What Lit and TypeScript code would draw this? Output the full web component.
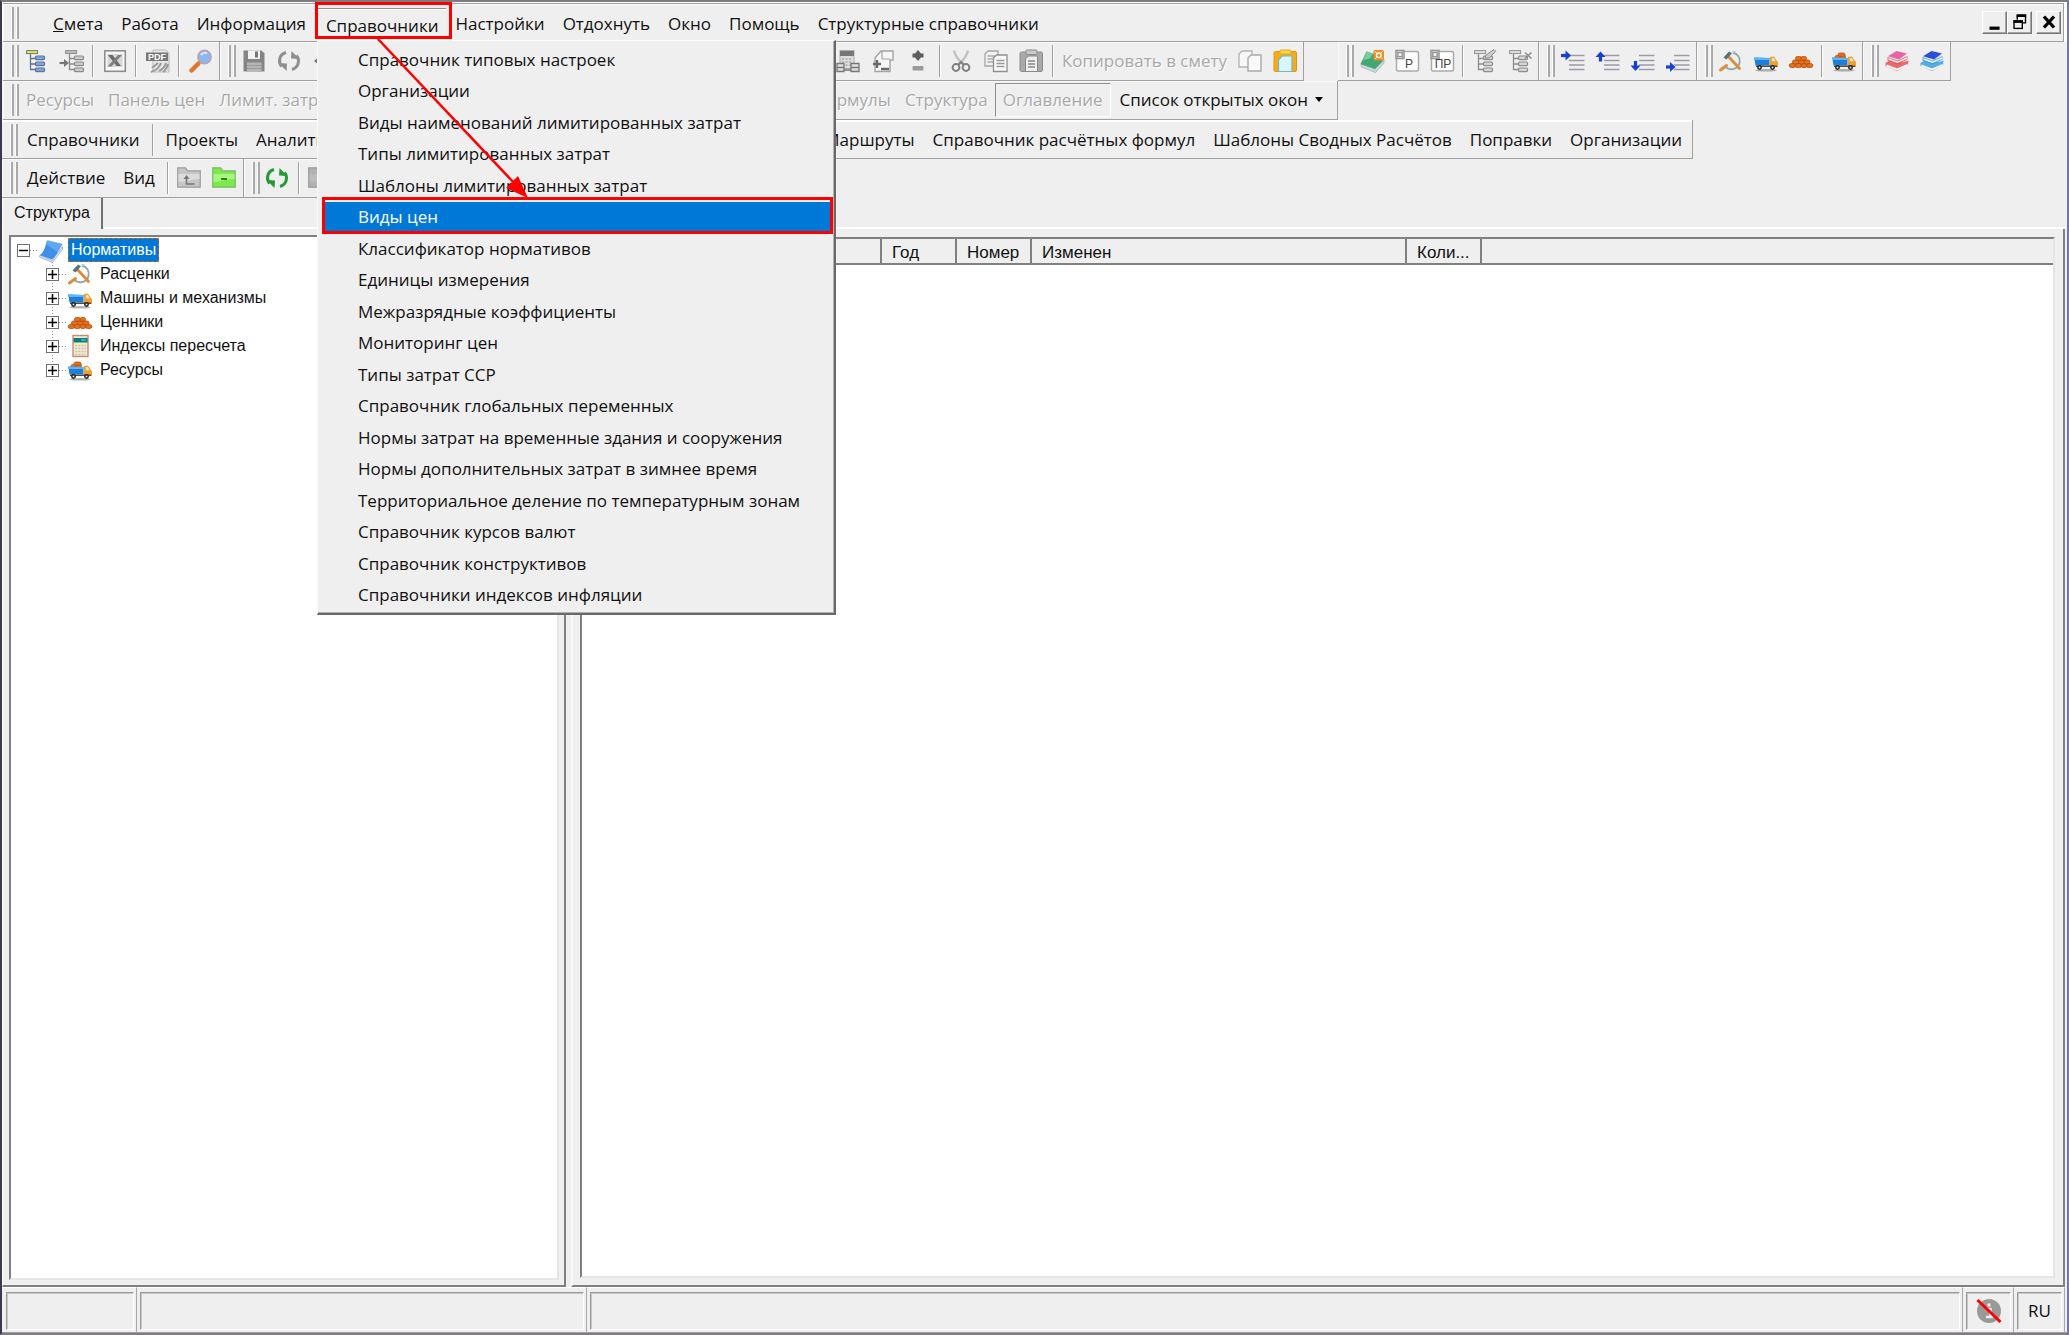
import { LitElement, html, css, svg, nothing } from "lit";
import { customElement, property, state } from "lit/decorators.js";
import { classMap } from "lit/directives/class-map.js";

const G = "#8e8e8e";

const hammer = svg`
  <path d="M14 3.500c5 1.500 7.500 5.500 6.500 10.500-.8 4-4.500 6.500-8.500 6.200-2-.1-4-.9-5.500-2.200" fill="none" stroke="#8fa9ad" stroke-width="2"/>
  <path d="M16.500 2.800l-3 .2" stroke="#b9cccf" stroke-width="1.500"/>
  <path d="M9 7l11.500 12.500" stroke="#d98f3a" stroke-width="2.800" stroke-linecap="round"/>
  <path d="M1.500 21l6-4.500" stroke="#d98f3a" stroke-width="3" stroke-linecap="round"/>
  <path d="M4.500 8.500l5.500-6 3 1.800-5.500 6.200z" fill="#5f7076"/>`;
const truckBody = svg`
  <ellipse cx="12" cy="21.300" rx="11" ry="1.300" fill="#777" opacity=".55"/>
  <path d="M.2 8.500l15.300 .5v7.500h-14z" fill="#1c7fdc"/>
  <path d="M.2 8.500l15.300 .5v2h-15z" fill="#5fb4f4"/>
  <path d="M15.800 8l4.200-.5 3 4.500 1 1v5h-8.200z" fill="#f0a12c"/>
  <path d="M17.800 9.200l2-.2 1.800 3.200h-3.800z" fill="#cfe9f5"/>
  <path d="M2 16.500h21v1.500h-21z" fill="#5a4a38"/>
  <circle cx="5.500" cy="18.500" r="2.400" fill="#222"/><circle cx="5.500" cy="18.500" r="1" fill="#ddd"/>
  <circle cx="18.500" cy="18.500" r="2.400" fill="#222"/><circle cx="18.500" cy="18.500" r="1" fill="#ddd"/>`;
const books = (cover: string, edge: string) => svg`
  <path d="M.5 14l4-2.500 14 1.500 5-1.500-.5 4.500-11 6-11.500-5z" fill="${edge}" opacity=".85"/>
  <path d="M1.500 15.500l10.500 4 10.500-4.500v1.800l-10.500 4.700-10.500-4z" fill="#fff"/>
  <path d="M2.500 8l10 3.500 10-4.500v3.500l-10 5-10-4z" fill="${edge}" opacity=".85"/>
  <path d="M3.500 9.200l9 3.300 9.500-4.200v1.500l-9.500 4.200-9-3.300z" fill="#fff"/>
  <path d="M3 7.300l8.500-5.300 10.500 2.500-8 6z" fill="${cover}"/>`;
const treeGlyph = (head: string, node: string, line: string) => svg`
  <path d="M5.500 5v15.500h5M5.500 9.500h5M5.500 15h5" fill="none" stroke="${line}" stroke-width="1.300"/>
  <rect x="1.600" y="1.600" width="11" height="3" fill="${head}" stroke="${line}" stroke-width=".9"/>
  <rect x="10.500" y="7" width="9" height="3.600" rx="1" fill="${node}" stroke="${line}" stroke-width="1.200"/>
  <rect x="10.500" y="13" width="9" height="3.600" rx="1" fill="${node}" stroke="${line}" stroke-width="1.200"/>
  <rect x="10.500" y="19" width="9" height="3.600" rx="1" fill="${node}" stroke="${line}" stroke-width="1.200"/>`;
const indentLines = svg`<path d="M8 6.500h15.500M8 11.500h15.500M8 16h15.500M8 20.500h15.500" stroke="#9a9ba8" stroke-width="1.500"/>`;
const gear = (c: string, x: number, y: number) => svg`
  <rect x="${x - 4}" y="${y - 4}" width="8" height="8" fill="#fff" stroke="${c}" stroke-width="1.600"/>
  <path d="M${x - 3} ${y - 3}l6 6M${x + 3} ${y - 3}l-6 6" stroke="${c}" stroke-width="1.400"/>
  <circle cx="${x}" cy="${y}" r="2.300" fill="#fff" stroke="${c}" stroke-width="1.400"/>`;
const sheet = (text: string, size: number) => svg`
  <rect x="1.500" y="2.500" width="22" height="19.500" rx="1.500" fill="#fdfdfd" stroke="#aaa" stroke-width="1.500"/>
  ${gear("#999", 5, 5.5)}
  <text x="${text.length > 1 ? 13 : 14}" y="19" text-anchor="middle" font-family="Liberation Sans, sans-serif" font-size="${size}" fill="#444">${text}</text>`;
const refresh = (c: string) => svg`
  <path d="M9 3.500c-7 2-8 9.500-4.500 14M15 20.500c7-2 8-9.500 4.500-14" fill="none" stroke="${c}" stroke-width="3"/>
  <path d="M1.500 14l8.500 .5-.5 7.500z M22.500 10l-8.500-.5 .5-7.500z" fill="${c}"/>`;
const folder = (a: string, b: string, line: string) => svg`
  <path d="M.8 21.200v-19.400h7.700l2 3h12.700v16.400z" fill="${b}" stroke="${line}" stroke-width="1.300"/>
  <path d="M1.500 8h21v5c-9 0-12 3-21 3z" fill="${a}"/>`;

const ICONS: Record<string, unknown> = {
  treeNew: treeGlyph("#f0e13c", "#7ea6e0", "#5f7391"),
  treeAdd: svg`<g transform="translate(4 0)">${treeGlyph("#bbb", "#ccc", "#8a8a8a")}</g>
    <path d="M-.5 14h6" stroke="#777" stroke-width="2.200"/><path d="M4 10l5 4-5 4z" fill="#777"/>`,
  excel: svg`<rect x="1.800" y="1.800" width="20.500" height="20.500" fill="#f7f7f7" stroke="${G}" stroke-width="1.600"/>
    <rect x="4.500" y="5" width="15" height="13" fill="#d6d6d6"/>
    <path d="M5 6h4.500l8.500 11h-4.500z" fill="#6a6a6a"/><path d="M15 6h4l-10.500 11.500h-4z" fill="#808080"/>`,
  pdf: svg`<path d="M7 1h13l3 3v19h-16z" fill="#e6e6e6" stroke="#bbb"/>
    <path d="M5 23c6-2 9-6 10-9M13 22c4-2 6-4 7-8M17 23c3-2 4-4 5-8M6 19l6-5" fill="none" stroke="#9a9a9a" stroke-width="2"/>
    <rect x="0" y="3.500" width="22" height="8.500" fill="#777"/>
    <text x="11" y="11" text-anchor="middle" font-family="Liberation Sans, sans-serif" font-weight="700" font-size="9" fill="#fff">PDF</text>`,
  search: svg`<path d="M2.500 21.500l7-7" stroke="#e0752a" stroke-width="4.500" stroke-linecap="round"/>
    <circle cx="15.500" cy="8" r="6.500" fill="#8cb8f4" stroke="#b7a3b5" stroke-width="1.800"/><path d="M12 6c1-2 4-3 6-1.500" stroke="#dceafc" stroke-width="2" fill="none"/>`,
  save: svg`<path d="M1.500 1.500h18l3 3v18h-21z" fill="#858585"/><rect x="6" y="1.500" width="12" height="8.500" fill="#f1f1f1"/><rect x="13" y="2.500" width="3" height="6" fill="#777"/><rect x="5" y="13.500" width="14.500" height="9" fill="#b5b5b5"/><path d="M5 16.500h14.500M5 19.500h14.500" stroke="#999"/>`,
  refreshGray: refresh("#8f8f8f"),
  refreshGreen: refresh("#229a35"),
  undo: svg`<path d="M3.500 12l5-4v8zM7 12h12" fill="#777" stroke="#777" stroke-width="2"/>`,
  calc: svg`<rect x="4" y="1.500" width="14" height="18" fill="#ddd" stroke="#aaa"/><rect x="4" y="2" width="14" height="5" fill="#777"/>
    <path d="M6 10h10M6 13h10M6 16h10" stroke="#aaa" stroke-width="1.600" stroke-dasharray="2 1.500"/>
    <path d="M1 14.500h7v8h-7zM15 14.500h8v8h-8z" fill="#e0e0e0" stroke="#777" stroke-width="1.300"/><path d="M1 18.500h7M15 18.500h8M8 21h7" stroke="#777" stroke-width="1.500"/>`,
  pageAdd: svg`<path d="M4 9l6-7h12v9h-3v11.500h-15z" fill="#f7f7f7" stroke="#a3a3a3" stroke-width="1.400"/><path d="M11 2v8h8" fill="none" stroke="#a3a3a3" stroke-width="1.200"/>
    <path d="M2 15h8M6 11v8M10 20h8" stroke="#6a6a6a" stroke-width="2.400"/>`,
  plusMinus: svg`<path d="M12 1l3 3.500h2.500v4h-2.500l-3 3.500-3-3.500h-2.500v-4h2.500z" fill="#5e5e5e"/><rect x="6.500" y="17" width="11" height="4.500" rx="1" fill="#999"/>`,
  cut: svg`<path d="M5 1.500c1 6 5 10 9.500 14M19 1.500c-1 6-5 10-9.500 14" fill="none" stroke="#c2c2c2" stroke-width="2.400"/>
    <circle cx="7" cy="18.500" r="3.400" fill="none" stroke="#808080" stroke-width="2"/><circle cx="17" cy="18.500" r="3.400" fill="none" stroke="#808080" stroke-width="2"/><path d="M9 16l3-3 3 3" stroke="#808080" stroke-width="2" fill="none"/>`,
  copy: svg`<path d="M1 5l3-3h10v15h-13z" fill="#f2f2f2" stroke="#a5a5a5" stroke-width="1.300"/><path d="M3.500 7h8M3.500 10h6M3.500 13h6" stroke="#aaa" stroke-width="1.300"/>
    <path d="M9.500 9l3-3h10.500v16.500h-13.500z" fill="#f8f8f8" stroke="#8f8f8f" stroke-width="1.300"/><path d="M12.500 11.500h8M12.500 14.500h8M12.500 17.500h8" stroke="#999" stroke-width="1.400"/>`,
  paste: svg`<rect x="1" y="3" width="22.500" height="19.500" rx="1.500" fill="#a9a9a9" stroke="#8c8c8c"/><rect x="7" y="1" width="11" height="4.500" rx="1" fill="#c8c8c8" stroke="#8c8c8c"/>
    <path d="M6.500 10l3-3h9v15.500h-12z" fill="#efefef" stroke="#888"/><path d="M9 12h7M9 15h7M9 18h7" stroke="#888" stroke-width="1.400"/>`,
  copyLight: svg`<path d="M1 5l3-3h10v16h-13z" fill="#f7f7f7" stroke="#b5b5b5" stroke-width="1.400"/><path d="M10 9l3-3h10v16h-13z" fill="#f9f9f9" stroke="#a9a9a9" stroke-width="1.400"/>`,
  pasteGold: svg`<rect x="1" y="2.500" width="22.500" height="20" rx="1.500" fill="#f7ab1c" stroke="#e29413"/><rect x="7" y="1" width="11" height="4" rx="1" fill="#ffd84a" stroke="#e0a820"/>
    <path d="M5.500 11l3.500-4h10v15.500h-13.500z" fill="#d8f5f7" stroke="#75b8c0" stroke-width="1.200"/>`,
  bookNew: svg`<path d="M1 15l14 5 9-10v4l-8.500 9.500-14-5.500z" fill="#cdd8de" stroke="#9fb2ba" stroke-width=".8"/>
    <path d="M.5 15l6-12.500 14.500 4.500 2 5-8 8z" fill="#3fa873"/><path d="M3 11l4-8.500 6 2-3 5z" fill="#7ccb9f"/>
    <rect x="13.500" y="1" width="10.500" height="10.500" rx="1.500" fill="#f58a1f"/><circle cx="18.800" cy="6.200" r="2.300" fill="#f58a1f" stroke="#fff" stroke-width="1.500"/><path d="M15 2.500l1.500 1.500M22.500 2.500l-1.500 1.500M15 10l1.500-1.500M22.500 10l-1.500-1.500" stroke="#fff"/>`,
  sheetP: sheet("Р", 12),
  sheetPR: sheet("ПР", 12),
  treeEdit: svg`${treeGlyph("#ddd", "#d5d5d5", "#8c8c8c")}<path d="M12 9l1-3 8-5.500 1.800 1.800-7 7z" fill="#ccc" stroke="#8c8c8c"/>`,
  treeDelete: svg`${treeGlyph("#ddd", "#d5d5d5", "#8c8c8c")}<path d="M17 3.500l6.500 6M23.500 3.500l-6.500 6" stroke="#8c8c8c" stroke-width="1.500"/>`,
  lineRight: svg`${indentLines}<path d="M0 6.500h6" stroke="#1540d8" stroke-width="3.200"/><path d="M4.500 1.500l5.500 5-5.500 5z" fill="#1540d8"/>`,
  lineUp: svg`${indentLines}<path d="M4.500 6v6.500" stroke="#1540d8" stroke-width="3.200"/><path d="M-.5 8l5-5.500 5 5.500z" fill="#1540d8"/>`,
  lineDown: svg`${indentLines}<path d="M4.500 12v6" stroke="#1540d8" stroke-width="3.200"/><path d="M-.5 16.500l5 5.500 5-5.500z" fill="#1540d8"/>`,
  lineLeft: svg`${indentLines}<path d="M0 18h6" stroke="#1540d8" stroke-width="3.200"/><path d="M4 13l5.500 5-5.500 5z" fill="#1540d8"/>`,
  hammer,
  truck: truckBody,
  bricks: svg`<g fill="#e4701c" stroke="#b64b0c" stroke-width=".8"><rect x=".3" y="14.500" width="6.500" height="4" rx="2"/><rect x="6" y="14.500" width="6.500" height="4" rx="2"/><rect x="12" y="14.500" width="6" height="4" rx="2"/><rect x="17.500" y="14.500" width="6.300" height="4" rx="2"/><rect x="3.500" y="11" width="6.500" height="3.800" rx="1.800"/><rect x="9.500" y="11" width="6" height="3.800" rx="1.800"/><rect x="15" y="11" width="6" height="3.800" rx="1.800"/><rect x="6.500" y="7.500" width="6" height="3.800" rx="1.800"/><rect x="12" y="7.500" width="5.500" height="3.800" rx="1.800"/></g>`,
  truckLoaded: svg`<g fill="#e4701c" stroke="#b64b0c" stroke-width=".7"><rect x="3" y="6.500" width="5.500" height="3.500" rx="1.500"/><rect x="8" y="6" width="5.500" height="3.500" rx="1.500"/><rect x="6" y="4" width="7" height="3.300" rx="1.500"/></g>${truckBody}`,
  booksPink: books("#ea62a6", "#e8545a"),
  booksBlue: books("#2a4fd8", "#3a9fe0"),
  book: svg`<path d="M1 17l12 5.500 10.500-14v3l-10 13-13-5.500z" fill="#dfe7ef" stroke="#8fa9c7" stroke-width=".8"/>
    <path d="M.5 17c3-1 5-5 7.500-14.500l15.500 3.500c-4 6-6 12-10.500 15.500z" fill="#3f8fea"/><path d="M7 6l1.500-4 15 4-5 8z" fill="#70b2f7" opacity=".7"/>`,
  calculator: svg`<rect x="5" y="1.500" width="15" height="21" fill="#f4ead0" stroke="#c58b76" stroke-width="1.400"/><rect x="5.500" y="4" width="14" height="4.500" fill="#137a7c"/><path d="M13 6h5" stroke="#27d5c5" stroke-width="1.500"/>
    <path d="M7 11.500h11M7 14.500h11M7 17.500h11M7 20.500h11" stroke="#c9c5ae" stroke-width="1.600" stroke-dasharray="2.200 1"/>`,
  folderUp: svg`${folder("#dcdcdc", "#c6c6c6", "#9c9c9c")}<path d="M9.500 11v7h8" stroke="#777" stroke-width="1.600" fill="none"/><path d="M6.500 13l3-4 3 4z" fill="#777"/>`,
  folderMinus: svg`${folder("#a5f780", "#7bea4d", "#7fb86a")}<path d="M9 13h6" stroke="#2f6b1a" stroke-width="1.800"/>`,
  folderGray: folder("#bcbcbc", "#b2b2b2", "#999"),
  info: svg`<circle cx="12" cy="12" r="12" fill="#999"/><path d="M9.500 10h4v7M9 18h7" stroke="#eee" stroke-width="2.600" fill="none"/><rect x="10.500" y="4.500" width="3" height="3" fill="#eee"/><path d="M.5 1l23 22" stroke="#f00" stroke-width="3"/>`,
  minimize: svg`<rect x="6" y="17" width="11" height="3.500" fill="#000"/>`,
  restore: svg`<path d="M9 9.500v-4.500h9v8h-3" fill="none" stroke="#000" stroke-width="1.500"/><path d="M8.300 5h10.500" stroke="#000" stroke-width="3"/><rect x="5.500" y="11" width="9" height="8" fill="none" stroke="#000" stroke-width="1.500"/><path d="M4.800 11.500h10.500" stroke="#000" stroke-width="3"/>`,
  close: svg`<path d="M6.500 6l11 12M17.500 6l-11 12" stroke="#000" stroke-width="3.600"/>`,
};

@customElement("ui-icon")
class UiIcon extends LitElement {
  @property() name = "";
  static styles = css`
    :host { display: block; width: 24px; height: 24px; flex: none; }
    .glyph { display: block; width: 100%; height: 100%; overflow: visible; }
  `;
  render() {
    return html`<svg class="glyph" viewBox="0 0 24 24" aria-hidden="true">${ICONS[this.name] ?? nothing}</svg>`;
  }
}

type Item = { icon: string; label: string } | { text: string; off?: boolean; pressed?: boolean; arrow?: boolean } | "sep" | "gap";

const icon = (name: string, label: string): Item => ({ icon: name, label });

const MAIN_A: Item[] = [
  icon("treeNew", "Новый раздел"), icon("treeAdd", "Добавить в структуру"), "sep",
  icon("excel", "Excel"), "sep", icon("pdf", "PDF"), "sep", icon("search", "Поиск"),
];
const MAIN_B: Item[] = [
  icon("save", "Сохранить"), icon("refreshGray", "Обновить"), icon("undo", "Отменить"), "gap",
  icon("calc", "Расчёт"), icon("pageAdd", "Добавить лист"), icon("plusMinus", "Знак"), "sep",
  icon("cut", "Вырезать"), icon("copy", "Копировать"), icon("paste", "Вставить"), "sep",
  { text: "Копировать в смету", off: true }, icon("copyLight", "Копия"), icon("pasteGold", "Вставить из буфера"),
];
const MAIN_C: Item[][] = [
  [icon("bookNew", "Новый норматив"), icon("sheetP", "Р"), icon("sheetPR", "ПР"), "sep", icon("treeEdit", "Изменить"), icon("treeDelete", "Удалить")],
  [icon("lineRight", "Вправо"), icon("lineUp", "Вверх"), icon("lineDown", "Вниз"), icon("lineLeft", "Внутрь")],
  [icon("hammer", "Расценки"), icon("truck", "Машины"), icon("bricks", "Ценники"), "sep", icon("truckLoaded", "Ресурсы")],
  [icon("booksPink", "Сборники"), icon("booksBlue", "Справочники")],
];
const PANELS: Item[] = [
  { text: "Ресурсы", off: true }, { text: "Панель цен", off: true }, { text: "Лимит. затраты", off: true }, "gap",
  { text: "Формулы", off: true }, { text: "Структура", off: true }, { text: "Оглавление", off: true, pressed: true },
  { text: "Список открытых окон", arrow: true },
];
const LINKS: Item[] = [
  { text: "Справочники" }, "sep", { text: "Проекты" }, { text: "Аналитика" }, "gap", { text: "Маршруты" },
  { text: "Справочник расчётных формул" }, { text: "Шаблоны Сводных Расчётов" }, { text: "Поправки" }, { text: "Организации" },
];
const ACTIONS: Item[] = [
  { text: "Действие" }, { text: "Вид" }, "sep", icon("folderUp", "На уровень выше"), icon("folderMinus", "Свернуть"),
];
const ACTIONS_B: Item[] = [icon("refreshGreen", "Обновить"), "sep", icon("folderGray", "Папка")];

const MENUS = ["Смета", "Работа", "Информация", "Справочники", "Настройки", "Отдохнуть", "Окно", "Помощь", "Структурные справочники"];
const ENTRIES = [
  "Справочник типовых настроек", "Организации", "Виды наименований лимитированных затрат", "Типы лимитированных затрат",
  "Шаблоны лимитированных затрат", "Виды цен", "Классификатор нормативов", "Единицы измерения", "Межразрядные коэффициенты",
  "Мониторинг цен", "Типы затрат ССР", "Справочник глобальных переменных", "Нормы затрат на временные здания и сооружения",
  "Нормы дополнительных затрат в зимнее время", "Территориальное деление по температурным зонам",
  "Справочник курсов валют", "Справочник конструктивов", "Справочники индексов инфляции",
];
const NODES = [
  ["hammer", "Расценки"], ["truck", "Машины и механизмы"], ["bricks", "Ценники"], ["calculator", "Индексы пересчета"], ["truckLoaded", "Ресурсы"],
];

@customElement("app-root")
class AppRoot extends LitElement {
  @state() private selected = "Виды цен";

  static styles = css`
    :host { display: block; font-family: "Open Sans", "Noto Sans", sans-serif; font-size: 17px; line-height: 24px; color: #111; }
    * { box-sizing: border-box; }
    button { font: inherit; color: inherit; background: none; border: 0; margin: 0; padding: 0; white-space: nowrap; text-align: left; }
    .window { position: relative; height: 100vh; min-height: 700px; display: flex; flex-direction: column; overflow: hidden; background: #efefef; border: 2px solid #7f7b80; border-left-color: #3a3a4c; border-right-color: #7476a6; }
    .band { display: flex; flex: none; height: 39px; padding-left: 1px; }
    .band.flush { padding-left: 0; }
    .first { height: 40px; padding-top: 1px; padding-right: 3px; background: #fff; }
    .first .group { flex: 1; border-top: 1px solid #a0a0a0; background: #efefef; }
    .group { display: flex; flex: none; align-items: center; padding-right: 1px; border-right: 1px solid #a0a0a0; border-bottom: 1px solid #a0a0a0; box-shadow: inset 1px 1px #fafafa; }
    .links { box-shadow: inset 0 2px #fff; padding-top: 2px; }
    .wide-b { width: 1084px; }
    .wide-panels { width: 1335px; }
    .wide-links { width: 1691px; }
    .far { margin-left: 34px; }
    .grip { display: flex; gap: 2px; width: 16px; height: 32px; padding-left: 8px; flex: none; }
    .grip i { width: 3px; border-left: 1px solid #fff; border-right: 2px solid #aaa; }
    .gap { flex: 1; }
    .sep { width: 8px; height: 32px; flex: none; padding-left: 3px; }
    .sep i { display: block; width: 2px; height: 100%; border-left: 1px solid #a0a0a0; border-right: 1px solid #fff; }
    .tool { width: 35px; height: 34px; display: flex; align-items: center; justify-content: center; flex: none; }
    .text { height: 34px; padding: 0 7px; flex: none; }
    .links .text, .actions .text { padding: 0 9px; }
    .wide-b .text { padding: 0 5px; }
    .off { color: #a8a8a8; text-shadow: 1px 1px #fff; }
    .pressed { border: 1px solid; border-color: #909090 #fff #fff #909090; margin-right: 2px; }
    .arrow { display: inline-block; margin: 0 6px 4px 7px; border: 4px solid transparent; border-top: 5px solid #000; border-bottom: 0; }
    .menus { display: flex; padding-left: 25px; flex: 1; height: 34px; }
    .menu { padding: 2px 9px 0; height: 34px; flex: none; }
    .menu.open { padding: 3px 8px 0 11px; border-top: 1px solid #909090; margin-top: 2px; box-shadow: inset 0 1px #fff; height: 32px; }
    .caption { display: flex; padding-right: 1px; margin-top: -1px; }
    .caption button { width: 25px; height: 23px; display: flex; justify-content: center; align-items: center; border: 1px solid; border-color: #fff #777 #777 #fff; box-shadow: inset -1px -1px #a5a5a5; }
    .caption .close { margin-left: 4px; }
    .caption ui-icon { width: 22px; height: 22px; }

    .main { flex: 1; min-height: 0; display: grid; grid-template-columns: 564px minmax(0, 1fr); column-gap: 5px; padding-right: 2px; }
    .side { display: flex; flex-direction: column; min-height: 0; }
    .tabs { height: 31px; flex: none; display: flex; }
    .tab { font: 16px/20px "Liberation Sans", Arial, sans-serif; height: 31px; width: 101px; padding: 0 0 2px 11px; border-right: 2px solid #707070; border-left: 1px solid #fff; }
    .rest { flex: 1; border-bottom: 2px solid #fff; }
    .pane { flex: 1; min-height: 0; padding: 6px 5px 5px 6px; border-right: 2px solid #808080; border-bottom: 2px solid #808080; border-left: 1px solid #fff; }
    .pane.right { padding: 8px 8px 7px 7px; border-left: 2px solid #f8f8f8; }
    .box { height: 100%; background: #fff; border: 2px solid; border-color: #808080 #e6e6e6 #e6e6e6 #808080; overflow: hidden; }
    .tree { list-style: none; margin: 0; padding: 1px 0 0; font: 16px/24px "Liberation Sans", Arial, sans-serif; }
    .node { display: flex; align-items: center; height: 24px; padding-left: 6px; }
    .child { padding-left: 35px; }
    .stem { display: flex; align-items: center; width: 13px; height: 24px; }
    .child .stem { background: repeating-linear-gradient(#999 0 1px, transparent 1px 3px) center / 1px 24px no-repeat; }
    .expand { width: 13px; height: 13px; display: grid; place-items: center; background: #fff; border: 1px solid #707070; }
    .expand svg { display: block; }
    .dots { width: 9px; height: 1px; background: repeating-linear-gradient(90deg, #888 0 1px, transparent 1px 3px); }
    .name { padding: 0 3px; margin-left: 5px; }
    .name.on { background: #0078d7; color: #fff; outline: 1px dashed #c56a12; outline-offset: -1px; }
    .grid { width: 100%; border-collapse: collapse; table-layout: fixed; font: 17px/20px "Liberation Sans", Arial, sans-serif; }
    .grid th { height: 25px; padding: 3px 0 0 10px; font-weight: 400; text-align: left; white-space: nowrap; background: #efefef; border-right: 2px solid #808080; border-bottom: 2px solid #808080; }
    .grid th:last-child { border-right: 0; }
    .c1 { width: 299px; } .c2 { width: 75px; } .c3 { width: 375px; }

    .status { flex: none; height: 46px; display: flex; padding: 0 2px 0 0; border-bottom: 1px solid #a0a0a0; }
    .slot { padding: 4px 2px 2px 3px; border-right: 1px solid #a8a8a8; border-top: 1px solid #fff; flex: none; }
    .cell { height: 100%; display: flex; align-items: center; justify-content: center; border: 1px solid; border-color: #999 #fff #fff #999; box-shadow: inset 1px 1px #c8c8c8; }
    .s1 { width: 135px; padding-left: 4px; } .s2 { width: 450px; } .s3 { flex: 1; } .s4 { width: 51px; }

    .dropdown { position: absolute; left: 315px; top: 38px; width: 519px; height: 575px; padding: 3px 4px 2px 4px; display: grid; grid-auto-rows: 1fr; background: #efefef; border: 1px solid; border-color: #fff #696969 #696969 #fafafa; border-right-width: 2px; border-bottom-width: 2px; box-shadow: inset -1px -1px #b0b0b0; }
    .entry { padding-left: 36px; }
    .entry.on { background: #0078d7; color: #fff; }
    .overlay { position: absolute; left: 0; top: 0; width: 900px; height: 300px; pointer-events: none; }
  `;

  private items(list: Item[]) {
    return list.map((it) => {
      if (it === "sep") return html`<span class="sep"><i></i></span>`;
      if (it === "gap") return html`<span class="gap"></span>`;
      if ("icon" in it) return html`<button class="tool" aria-label=${it.label}><ui-icon name=${it.icon}></ui-icon></button>`;
      return html`<button class=${classMap({ text: true, off: !!it.off, pressed: !!it.pressed })} ?disabled=${!!it.off}>${it.text}${it.arrow ? html`<i class="arrow"></i>` : nothing}</button>`;
    });
  }

  private group(list: Item[], cls = "") {
    return html`<div class="group ${cls}" role="toolbar"><span class="grip"><i></i><i></i></span>${this.items(list)}</div>`;
  }

  private expander(open: boolean) {
    return html`<span class="stem"><button class="expand" aria-label=${open ? "Свернуть" : "Развернуть"}>
      <svg width="9" height="9" viewBox="0 0 9 9"><path d=${open ? "M0 4.500h9" : "M0 4.500h9M4.500 0v9"} stroke="#000" stroke-width="1.500"></path></svg>
    </button></span><span class="dots"></span>`;
  }

  render() {
    return html`
      <div class="window">
        <div class="band first">
          <div class="group">
            <span class="grip"><i></i><i></i></span>
            <nav class="menus">
              ${MENUS.map((m, i) => html`<button class=${classMap({ menu: true, open: i === 3 })}>${i === 0 ? html`<u>С</u>мета` : m}</button>`)}
            </nav>
            <div class="caption">
              <button aria-label="Свернуть"><ui-icon name="minimize"></ui-icon></button>
              <button aria-label="Восстановить"><ui-icon name="restore"></ui-icon></button>
              <button class="close" aria-label="Закрыть"><ui-icon name="close"></ui-icon></button>
            </div>
          </div>
        </div>
        <div class="band">
          ${this.group(MAIN_A)}${this.group(MAIN_B, "wide-b")}
          ${MAIN_C.map((g, i) => this.group(g, i === 0 ? "far" : ""))}
        </div>
        <div class="band">${this.group(PANELS, "wide-panels")}</div>
        <div class="band flush">${this.group(LINKS, "links wide-links")}</div>
        <div class="band flush">${this.group(ACTIONS, "actions")}${this.group(ACTIONS_B)}</div>

        <main class="main">
          <section class="side">
            <div class="tabs"><button class="tab">Структура</button><span class="rest"></span></div>
            <div class="pane"><div class="box">
              <ul class="tree">
                <li class="node">${this.expander(true)}<ui-icon name="book"></ui-icon><span class="name on">Нормативы</span></li>
                ${NODES.map(([ic, label]) => html`<li class="node child">${this.expander(false)}<ui-icon name=${ic}></ui-icon><span class="name">${label}</span></li>`)}
              </ul>
            </div></div>
          </section>
          <section class="side">
            <div class="tabs"><span class="rest"></span></div>
            <div class="pane right"><div class="box">
              <table class="grid">
                <colgroup><col class="c1"><col class="c2"><col class="c2"><col class="c3"><col class="c2"><col></colgroup>
                <thead><tr><th></th><th>Год</th><th>Номер</th><th>Изменен</th><th>Коли...</th><th></th></tr></thead>
              </table>
            </div></div>
          </section>
        </main>

        <footer class="status">
          <div class="slot s1"><div class="cell"></div></div>
          <div class="slot s2"><div class="cell"></div></div>
          <div class="slot s3"><div class="cell"></div></div>
          <div class="slot s4"><div class="cell"><ui-icon name="info"></ui-icon></div></div>
          <div class="slot s4"><div class="cell">RU</div></div>
        </footer>

        <div class="dropdown" role="menu">
          ${ENTRIES.map((e) => html`<button role="menuitem" class=${classMap({ entry: true, on: e === this.selected })} @click=${() => (this.selected = e)}>${e}</button>`)}
        </div>
        <svg class="overlay" viewBox="2 2 900 300" aria-hidden="true">
          <rect x="316.500" y="3.500" width="134" height="34" fill="none" stroke="#f00" stroke-width="3"></rect>
          <rect x="323.500" y="198.500" width="508" height="34" fill="none" stroke="#f00" stroke-width="3"></rect>
          <path d="M378 39L516 185" stroke="#f00" stroke-width="2.500"></path>
          <path d="M528 198L506 188L518 176Z" fill="#f00"></path>
        </svg>
      </div>
    `;
  }
}
